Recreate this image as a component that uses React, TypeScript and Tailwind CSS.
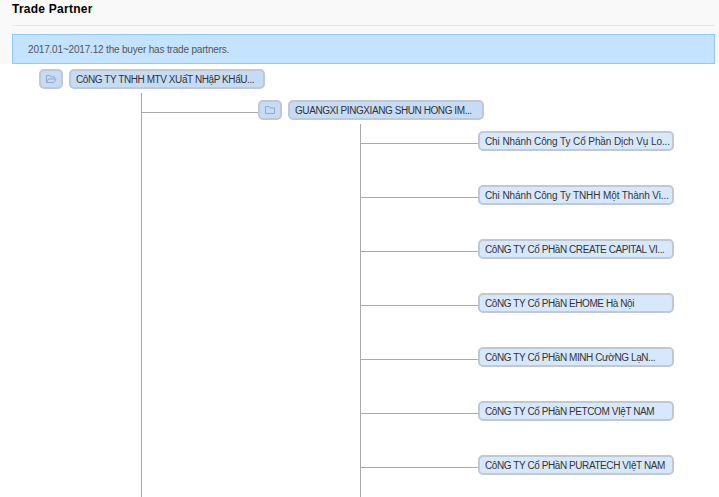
const companies = [
  { name: "Chi Nhánh Công Ty Cổ Phần Dịch Vụ Lo...", tight: false },
  { name: "Chi Nhánh Công Ty TNHH Một Thành Vi...", tight: false },
  { name: "CôNG TY Cổ PHầN CREATE CAPITAL VI...", tight: true },
  { name: "CôNG TY Cổ PHầN EHOME Hà Nội", tight: true },
  { name: "CôNG TY Cổ PHầN MINH CườNG LạN...", tight: true },
  { name: "CôNG TY Cổ PHầN PETCOM VIệT NAM", tight: true },
  { name: "CôNG TY Cổ PHầN PURATECH VIệT NAM", tight: true },
];

function FolderButton({ open }: { open?: boolean }) {
  return (
    <div className="flex h-[20px] w-[24px] shrink-0 items-center justify-center rounded-[5px] border-2 border-[#bfc8d3] bg-[#c6dcf6]">
      <svg width="12" height="10" viewBox="0 0 12 10" fill="none" stroke="#93a8c2" strokeWidth="1">
        {open ? (
          <path d="M1.5 8.5V1.5H5L6 3H9.5V4.5M1.5 8.5H9L11 5H3.5L1.5 8.5Z" />
        ) : (
          <path d="M1.5 8.5V1.5H5L6 3H10.5V8.5H1.5Z" />
        )}
      </svg>
    </div>
  );
}

function Node({ label, light, tight }: { label: string; light?: boolean; tight?: boolean }) {
  return (
    <div
      className={`flex h-[20px] w-[196px] shrink-0 items-center whitespace-nowrap rounded-[5px] border-2 border-[#bfc8d3] pl-[5px] text-[10px] text-[#333] ${tight ? "tracking-[-0.42px]" : "tracking-[-0.1px]"} ${light ? "bg-[#d8e8fc]" : "bg-[#c6dcf6]"}`}
    >
      {label}
    </div>
  );
}

export default function App() {
  return (
    <div className="h-[497px] overflow-hidden bg-[#f9f9f9] pl-[12px] pr-[4px] font-['Liberation_Sans',Arial,sans-serif]">
      <div className="h-[26px] border-b border-[#e6e6e6] pt-[2px] text-[12px] leading-[15px] font-bold tracking-[0.25px] text-black">
        Trade Partner
      </div>
      <div className="mt-[8px] flex h-[30px] items-center border border-[#8fcbff] bg-[#c4e3ff] pl-[15px] text-[10px] tracking-[-0.18px] text-[#555]">
        2017.01~2017.12 the buyer has trade partners.
      </div>
      <div className="-ml-[12px] -mr-[4px] h-[434px] bg-white pt-[5px] pl-[39px]">
        <div className="flex gap-[6px]">
          <FolderButton open />
          <Node label="CôNG TY TNHH MTV XUấT NHậP KHẩU..." tight />
        </div>
        <div className="mt-[4px] ml-[102px] border-l border-[#aaa] pt-[7px]">
          <div className="flex items-start">
            <div className="mt-[12px] h-px w-[116px] bg-[#aaa]" />
            <FolderButton />
            <div className="w-[6px]" />
            <Node label="GUANGXI PINGXIANG SHUN HONG IM..." tight />
          </div>
          <div className="mt-[4px] ml-[218px] flex h-[380px] flex-col gap-[34px] border-l border-[#aaa] pt-[7px]">
            {companies.map((c) => (
              <div key={c.name} className="flex items-start">
                <div className="mt-[12px] h-px w-[117px] bg-[#aaa]" />
                <Node label={c.name} tight={c.tight} light />
              </div>
            ))}
          </div>
        </div>
      </div>
    </div>
  );
}
